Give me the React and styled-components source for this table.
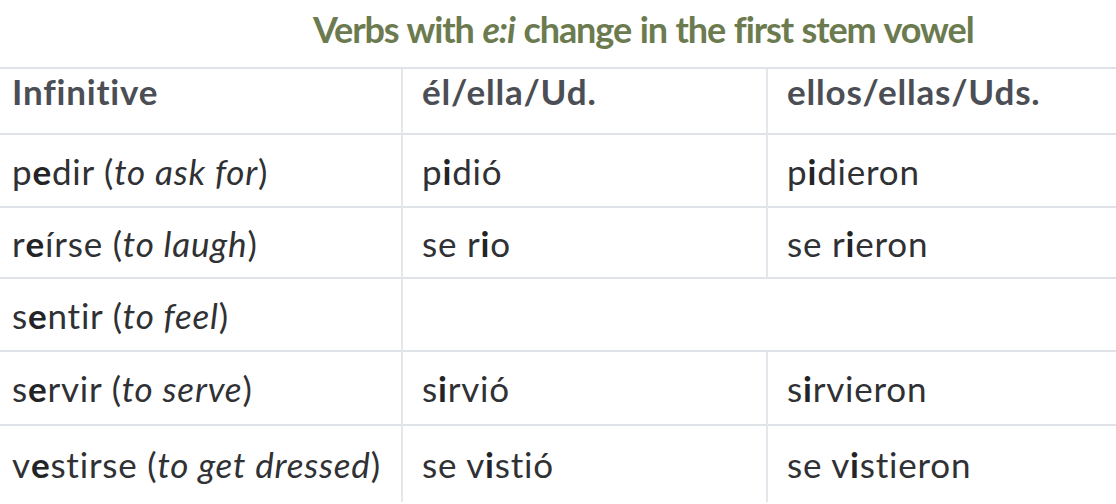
import React from 'react';
import styled, { createGlobalStyle } from 'styled-components';

const GlobalStyle = createGlobalStyle`
  html, body {
    margin: 0;
    padding: 0;
    background: #ffffff;
    overflow: hidden;
  }
  body {
    font-family: Lato, "Open Sans", sans-serif;
    font-variant-ligatures: none;
    -webkit-font-smoothing: antialiased;
  }
`;

const rows = [
  { id: 1, verb: ['p', 'e', 'dir'], gloss: 'to ask for', past: ['p', 'i', 'dió'], plural: ['p', 'i', 'dieron'] },
  { id: 2, verb: ['r', 'e', 'írse'], gloss: 'to laugh', past: ['se r', 'i', 'o'], plural: ['se r', 'i', 'eron'] },
  { id: 3, verb: ['s', 'e', 'ntir'], gloss: 'to feel', past: null, plural: null },
  { id: 4, verb: ['s', 'e', 'rvir'], gloss: 'to serve', past: ['s', 'i', 'rvió'], plural: ['s', 'i', 'rvieron'] },
  { id: 5, verb: ['v', 'e', 'stirse'], gloss: 'to get dressed', past: ['se v', 'i', 'stió'], plural: ['se v', 'i', 'stieron'] },
];

const Page = styled.div`
  width: 1116px;
  height: 504px;
  overflow: hidden;
`;

const Title = styled.h1`
  margin: 0;
  padding: 7px 0 0 313px;
  height: 67px;
  box-sizing: border-box;
  font-size: 36px;
  font-weight: 700;
  letter-spacing: -1.1px;
  word-spacing: 1px;
  color: #6c7b4f;
  line-height: 44px;
  white-space: nowrap;
`;

const Grid = styled.div`
  display: grid;
  grid-template-columns: 403px 365px 1fr;
  grid-template-rows: 66px 73px 71px 73px 74px 1fr;
  height: 433px;
  border-top: 2px solid #dfe3e8;
`;

const Cell = styled.div`
  display: flex;
  align-items: center;
  padding-left: ${(p) => (p.$first ? '12px' : '19px')};
  padding-bottom: ${(p) => (p.$head ? '20px' : '0')};
  border-right: ${(p) => (p.$last ? 'none' : '2px solid #e3e7ec')};
  border-bottom: ${(p) => (p.$bottom ? 'none' : '2px solid #dfe3e8')};
  grid-column: ${(p) => p.$span || 'auto'};
  font-size: 35px;
  letter-spacing: 0.8px;
  font-weight: ${(p) => (p.$head ? 700 : 400)};
  color: ${(p) => (p.$head ? '#4b4e54' : '#303134')};
  white-space: nowrap;
  overflow: hidden;
`;

const Strong = styled.b`
  font-weight: 700;
  color: #222326;
`;

const Gloss = styled.i`
  font-style: italic;
`;

const Marked = ({ parts }) => (
  <>
    {parts[0]}
    <Strong>{parts[1]}</Strong>
    {parts[2]}
  </>
);

const App = () => {
  return (
    <Page>
      <GlobalStyle />
      <Title>
        Verbs with <i>e:i</i> change in the first stem vowel
      </Title>
      <Grid>
        <Cell $head $first>Infinitive</Cell>
        <Cell $head>él/ella/Ud.</Cell>
        <Cell $head $last>ellos/ellas/Uds.</Cell>
        {rows.map((row, i) => {
          const bottom = i === rows.length - 1;
          return (
            <React.Fragment key={row.id}>
              <Cell $first $bottom={bottom}>
                <Marked parts={row.verb} />
                &nbsp;(<Gloss>{row.gloss}</Gloss>)
              </Cell>
              {row.past ? (
                <>
                  <Cell $bottom={bottom}>
                    <Marked parts={row.past} />
                  </Cell>
                  <Cell $last $bottom={bottom}>
                    <Marked parts={row.plural} />
                  </Cell>
                </>
              ) : (
                <Cell $last $bottom={bottom} $span="span 2" />
              )}
            </React.Fragment>
          );
        })}
      </Grid>
    </Page>
  );
};

export default App;
